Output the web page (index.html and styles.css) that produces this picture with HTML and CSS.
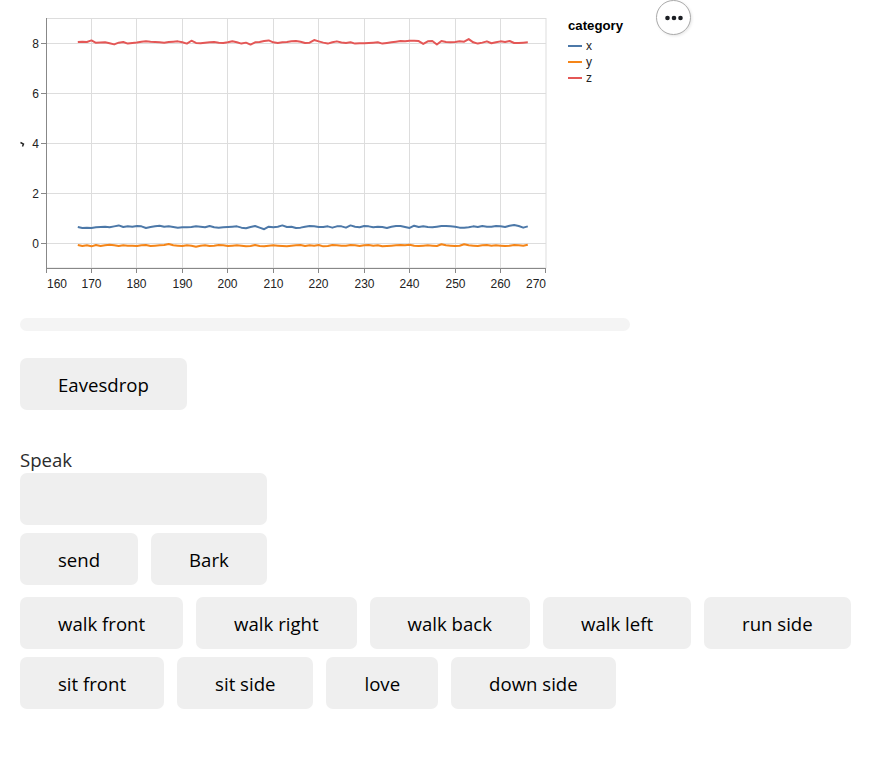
FILE: index.html
```html
<!DOCTYPE html>
<html lang="en">
<head>
<meta charset="utf-8">
<title>Dog control</title>
<link rel="stylesheet" href="styles.css">
</head>
<body>
<div class="page">
  <div class="chart">
    <svg class="plot" width="700" height="300" viewBox="0 0 700 300" xmlns="http://www.w3.org/2000/svg">
      <g class="grid">
        <line x1="46" y1="243.5" x2="546" y2="243.5"/>
        <line x1="46" y1="193.5" x2="546" y2="193.5"/>
        <line x1="46" y1="143.5" x2="546" y2="143.5"/>
        <line x1="46" y1="93.5" x2="546" y2="93.5"/>
        <line x1="46" y1="43.5" x2="546" y2="43.5"/>
        <line x1="91.5" y1="18" x2="91.5" y2="268"/>
        <line x1="136.5" y1="18" x2="136.5" y2="268"/>
        <line x1="182.5" y1="18" x2="182.5" y2="268"/>
        <line x1="227.5" y1="18" x2="227.5" y2="268"/>
        <line x1="273.5" y1="18" x2="273.5" y2="268"/>
        <line x1="318.5" y1="18" x2="318.5" y2="268"/>
        <line x1="364.5" y1="18" x2="364.5" y2="268"/>
        <line x1="409.5" y1="18" x2="409.5" y2="268"/>
        <line x1="455.5" y1="18" x2="455.5" y2="268"/>
        <line x1="500.5" y1="18" x2="500.5" y2="268"/>
        <rect x="46.5" y="18.5" width="499.5" height="249.5" fill="none"/>
      </g>
      <g class="axis">
        <line x1="46.5" y1="18" x2="46.5" y2="268"/>
        <line x1="46" y1="268.5" x2="546" y2="268.5"/>
        <line x1="41" y1="243.5" x2="46" y2="243.5"/>
        <line x1="41" y1="193.5" x2="46" y2="193.5"/>
        <line x1="41" y1="143.5" x2="46" y2="143.5"/>
        <line x1="41" y1="93.5" x2="46" y2="93.5"/>
        <line x1="41" y1="43.5" x2="46" y2="43.5"/>
        <line x1="46.5" y1="268" x2="46.5" y2="273"/>
        <line x1="91.5" y1="268" x2="91.5" y2="273"/>
        <line x1="136.5" y1="268" x2="136.5" y2="273"/>
        <line x1="182.5" y1="268" x2="182.5" y2="273"/>
        <line x1="227.5" y1="268" x2="227.5" y2="273"/>
        <line x1="273.5" y1="268" x2="273.5" y2="273"/>
        <line x1="318.5" y1="268" x2="318.5" y2="273"/>
        <line x1="364.5" y1="268" x2="364.5" y2="273"/>
        <line x1="409.5" y1="268" x2="409.5" y2="273"/>
        <line x1="455.5" y1="268" x2="455.5" y2="273"/>
        <line x1="500.5" y1="268" x2="500.5" y2="273"/>
        <line x1="545.5" y1="268" x2="545.5" y2="273"/>
      </g>
      <g class="ylabels">
        <text x="39" y="247.5">0</text>
        <text x="39" y="197.5">2</text>
        <text x="39" y="147.5">4</text>
        <text x="39" y="97.5">6</text>
        <text x="39" y="47.5">8</text>
      </g>
      <path class="ytitle" d="M20.5 142.5 L23.5 144 L22.5 146.5"/>
      <g class="xlabels">
        <text x="47" y="287.5" class="start">160</text>
        <text x="91.5" y="287.5">170</text>
        <text x="136.5" y="287.5">180</text>
        <text x="182.5" y="287.5">190</text>
        <text x="227.5" y="287.5">200</text>
        <text x="273.5" y="287.5">210</text>
        <text x="318.5" y="287.5">220</text>
        <text x="364.5" y="287.5">230</text>
        <text x="409.5" y="287.5">240</text>
        <text x="455.5" y="287.5">250</text>
        <text x="500.5" y="287.5">260</text>
        <text x="546" y="287.5" class="end">270</text>
      </g>
      <g transform="translate(77.8 0) scale(4.5454 1)">
        <polyline class="series s-x" transform="translate(0 227) scale(1 1.6) translate(0 -227)" points="0,227 1,227.6 2,227.4 3,227.6 4,227.2 5,227 6,226.8 7,227.2 8,226.6 9,226 10,227 11,226.6 12,226.8 13,226.4 14,226.6 15,227.6 16,227 17,226.6 18,226.2 19,226.8 20,226.6 21,227 22,227.4 23,227.2 24,227.2 25,227 26,226.6 27,226.8 28,227.2 29,226.4 30,227.2 31,227.4 32,227.2 33,227 34,226.8 35,226.6 36,227.4 37,227.8 38,227 39,226.4 40,227.4 41,228.4 42,226.8 43,227.2 44,226.8 45,226 46,227 47,226.8 48,227.6 49,227.4 50,226.8 51,226.4 52,226.6 53,227 54,227 55,226.6 56,227.4 57,226.6 58,226.6 59,227.4 60,226 61,226.8 62,227.2 63,226.4 64,226.6 65,227.2 66,226.8 67,227 68,227.6 69,226.8 70,226.4 71,226.4 72,227 73,227.6 74,226.2 75,227 76,226.6 77,227 78,227.2 79,226.8 80,226.4 81,226.4 82,226.6 83,226.8 84,227.4 85,227.4 86,227.2 87,226.6 88,227 89,226.4 90,226.8 91,226.8 92,226.4 93,226.6 94,227 95,226.2 96,225.8 97,226.4 98,227.4 99,226.6"/>
        <polyline class="series s-y" transform="translate(0 245.5) scale(1 1.7) translate(0 -245.5)" points="0,245.2 1,245.8 2,245.4 3,246 4,245.2 5,245.8 6,245.4 7,245 8,245.4 9,245.8 10,245.4 11,245.6 12,245.6 13,245.8 14,245.4 15,245.2 16,245.8 17,245.6 18,245.4 19,245.2 20,244.6 21,245.4 22,245.6 23,245.8 24,245.4 25,245.6 26,246.2 27,245.6 28,245.4 29,245.8 30,245.6 31,245.2 32,245.4 33,245.8 34,245.6 35,245.4 36,245.6 37,246 38,245.8 39,245.2 40,245.8 41,246 42,245.6 43,245.4 44,245.6 45,245.8 46,246 47,245.6 48,245.4 49,245.2 50,245.8 51,245.4 52,245.6 53,245.2 54,246 55,245.8 56,245.2 57,245.4 58,245.6 59,245.6 60,245.2 61,245.4 62,245.8 63,245.4 64,245.2 65,245.6 66,245.4 67,246 68,245.8 69,245.6 70,245.4 71,245.2 72,245.4 73,245 74,245.6 75,245.8 76,245.6 77,245.4 78,245.6 79,245.8 80,244.8 81,245.4 82,245.6 83,245.8 84,245.6 85,244.8 86,245.4 87,245.6 88,245.8 89,245.4 90,245.2 91,245.6 92,245.4 93,245.6 94,245.8 95,245.6 96,245.2 97,245.4 98,245.6 99,245"/>
        <polyline class="series s-z" transform="translate(0 42) scale(1 1.6) translate(0 -42)" points="0,42 1,41.8 2,42 3,41 4,42.5 5,42.3 6,42.2 7,42.8 8,43.5 9,42.4 10,42 11,43 12,42.6 13,42.3 14,41.8 15,41.5 16,41.8 17,42 18,42.2 19,42.4 20,42 21,41.8 22,41.6 23,42.2 24,43 25,41.2 26,42.6 27,42.8 28,42.4 29,42.2 30,42 31,42.4 32,42.6 33,42.2 34,41.5 35,42.2 36,43 37,42.4 38,43.6 39,42.2 40,42 41,41.4 42,41 43,42.2 44,42.6 45,42.2 46,42 47,41.6 48,41.4 49,41.8 50,42.6 51,42.4 52,40.8 53,41.6 54,42.4 55,43 56,42.2 57,41.6 58,42.3 59,42.6 60,42.2 61,43 62,42.8 63,42.8 64,42.6 65,42.4 66,42.2 67,43 68,42.6 69,42.2 70,41.8 71,41.4 72,41.6 73,41.2 74,41.2 75,41.4 76,43.2 77,41.6 78,41.4 79,43.6 80,41.4 81,42 82,42.2 83,42 84,41.6 85,41.8 86,40.2 87,42.2 88,43 89,42.4 90,41.6 91,42.8 92,42.2 93,41.6 94,42 95,41.4 96,42.6 97,42.6 98,42.4 99,42.2"/>
      </g>
      <g class="legend">
        <text class="legend-title" x="568" y="30">category</text>
        <line class="s-x" x1="568" y1="46" x2="582" y2="46"/>
        <line class="s-y" x1="568" y1="62" x2="582" y2="62"/>
        <line class="s-z" x1="568" y1="78" x2="582" y2="78"/>
        <text x="586" y="50">x</text>
        <text x="586" y="66">y</text>
        <text x="586" y="82">z</text>
      </g>
    </svg>
    <button class="embed-actions" type="button" aria-label="Actions">
      <svg width="20" height="6" viewBox="0 0 20 6" xmlns="http://www.w3.org/2000/svg">
        <circle cx="3.5" cy="3" r="2.3"/>
        <circle cx="10" cy="3" r="2.3"/>
        <circle cx="16.5" cy="3" r="2.3"/>
      </svg>
    </button>
  </div>

  <div class="content">
    <div class="progress"></div>
    <button class="btn eaves" type="button">Eavesdrop</button>
    <label class="speak-label" for="speak">Speak</label>
    <input class="speak-input" id="speak" type="text">
    <div class="row">
      <button class="btn" type="button">send</button>
      <button class="btn" type="button">Bark</button>
    </div>
    <div class="actions">
      <button class="btn" type="button">walk front</button>
      <button class="btn" type="button">walk right</button>
      <button class="btn" type="button">walk back</button>
      <button class="btn" type="button">walk left</button>
      <button class="btn" type="button">run side</button>
      <button class="btn" type="button">sit front</button>
      <button class="btn" type="button">sit side</button>
      <button class="btn" type="button">love</button>
      <button class="btn" type="button">down side</button>
    </div>
  </div>
</div>
</body>
</html>
```

FILE: styles.css
```css
* {
  box-sizing: border-box;
}

body {
  margin: 0;
  background: #ffffff;
  font-family: "Open Sans", "Noto Sans", sans-serif;
  color: #000000;
}

.chart {
  position: relative;
  height: 300px;
}

.plot {
  display: block;
}

.grid line,
.grid rect {
  stroke: #dddddd;
  stroke-width: 1;
}

.axis line {
  stroke: #888888;
  stroke-width: 1;
}

.ylabels text,
.xlabels text,
.legend text {
  font-family: "Liberation Sans", Arial, sans-serif;
  font-size: 12px;
  fill: #222222;
}

.ylabels text {
  text-anchor: end;
}

.xlabels text {
  text-anchor: middle;
}

.xlabels text.start {
  text-anchor: start;
}

.xlabels text.end {
  text-anchor: end;
}

.ytitle {
  fill: none;
  stroke: #222222;
  stroke-width: 1.4;
}

.series {
  fill: none;
  stroke-width: 2;
  stroke-linejoin: round;
  vector-effect: non-scaling-stroke;
}

.s-x { stroke: #4c78a8; }
.s-y { stroke: #f58518; }
.s-z { stroke: #e45756; }

.legend line {
  stroke-width: 2;
}

.legend .legend-title {
  font-size: 13.2px;
  font-weight: bold;
  fill: #000000;
}

.embed-actions {
  position: absolute;
  left: 656px;
  top: 0;
  width: 35px;
  height: 35px;
  padding: 0;
  border: 1px solid #aaaaaa;
  border-radius: 50%;
  background: #ffffff;
  box-shadow: 1px 1px 3px rgba(0, 0, 0, 0.1);
  display: flex;
  align-items: center;
  justify-content: center;
}

.embed-actions svg {
  fill: #1b1e23;
  display: block;
}

.content {
  padding: 18px 0 0 20px;
}

.progress {
  width: 610px;
  height: 13px;
  border-radius: 7px;
  background: #f4f4f4;
}

.btn {
  height: 52px;
  padding: 0 38px;
  border: 0;
  border-radius: 7px;
  background: #efefef;
  font-family: "Open Sans", "Noto Sans", sans-serif;
  font-size: 18.6px;
  color: #000000;
  white-space: nowrap;
}

.eaves {
  display: block;
  margin-top: 27px;
}

.speak-label {
  display: block;
  margin-top: 38px;
  line-height: 24px;
  font-size: 18.6px;
  color: #2b2b2b;
}

.speak-input {
  display: block;
  margin-top: 1px;
  width: 247px;
  height: 52px;
  border: 0;
  border-radius: 7px;
  background: #efefef;
  font-family: inherit;
  font-size: 18.6px;
}

.row {
  display: flex;
  gap: 13px;
  margin-top: 8px;
}

.actions {
  display: flex;
  flex-wrap: wrap;
  gap: 8px 13px;
  margin-top: 12px;
}
```
